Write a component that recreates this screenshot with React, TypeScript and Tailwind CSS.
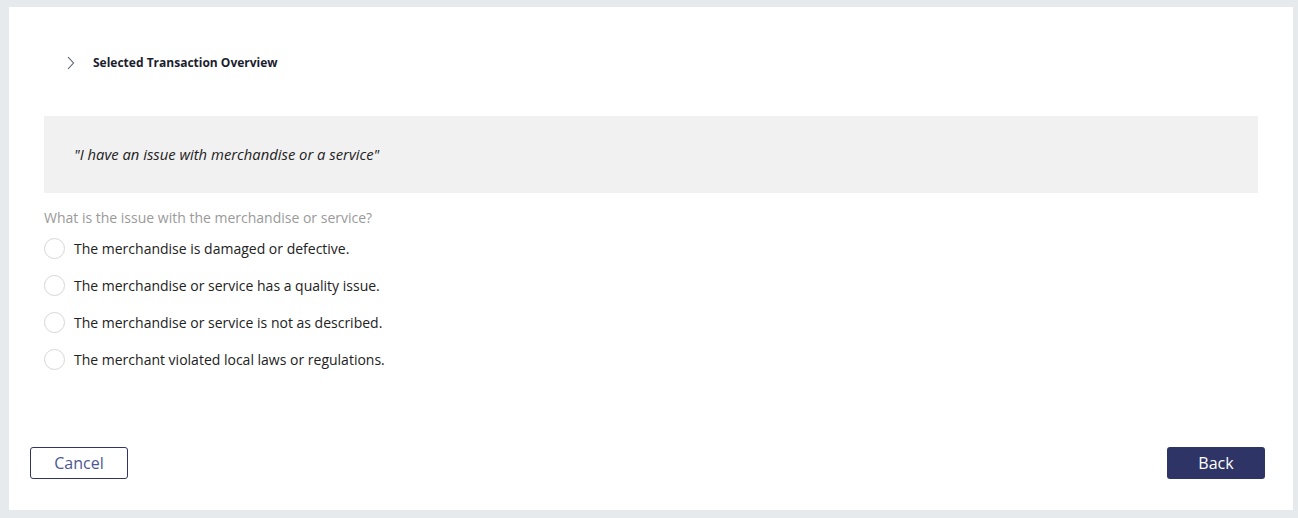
import React, { useState } from 'react';

const options = [
  'The merchandise is damaged or defective.',
  'The merchandise or service has a quality issue.',
  'The merchandise or service is not as described.',
  'The merchant violated local laws or regulations.',
];

export default function App() {
  const [selected, setSelected] = useState<number | null>(null);

  return (
    <div className="w-[1298px] h-[518px] bg-[#e6eaed] pt-[7px] pl-[9px] pr-[5px] pb-[8px] font-['Open_Sans',sans-serif]">
      <div className="bg-white h-full flex flex-col">
        {/* Header */}
        <div className="flex items-center h-[109px] pl-[58px] pt-[3px]">
          <svg width="8" height="14" viewBox="0 0 8 14" fill="none" className="mt-[-1px]">
            <path d="M1 1 L6.5 7 L1 13" stroke="#555b75" strokeWidth="1.1" />
          </svg>
          <span className="ml-[18px] text-[12px] font-bold text-[#1b1d2e]">Selected Transaction Overview</span>
        </div>

        <div className="px-[35px]">
          <div className="bg-[#f1f1f1] h-[77px] flex items-center pl-[30px]">
            <span className="italic text-[14.8px] text-[#222]">"I have an issue with merchandise or a service"</span>
          </div>

          <p className="mt-[15px] text-[14px] text-[#9a9a9a] leading-[20px]">
            What is the issue with the merchandise or service?
          </p>

          <div className="mt-[2px] flex flex-col">
            {options.map((opt, i) => (
              <label
                key={i}
                className="flex items-center h-[37px] cursor-pointer"
                onClick={() => setSelected(i)}
              >
                <span className="w-[21px] h-[21px] rounded-full border border-[#d6d6d6] bg-white flex items-center justify-center">
                  {selected === i && <span className="w-[11px] h-[11px] rounded-full bg-[#2e3566]" />}
                </span>
                <span className="ml-[9px] text-[14px] text-[#222]">{opt}</span>
              </label>
            ))}
          </div>
        </div>

        <div className="mt-auto flex justify-between pl-[21px] pr-[28px] pb-[31px]">
          <button className="w-[98px] h-[32px] rounded-[3px] border border-[#2e3566] text-[16px] text-[#4b5794] bg-white">
            Cancel
          </button>
          <button className="w-[98px] h-[32px] rounded-[3px] bg-[#2e3566] text-[16px] text-white">
            Back
          </button>
        </div>
      </div>
    </div>
  );
}
